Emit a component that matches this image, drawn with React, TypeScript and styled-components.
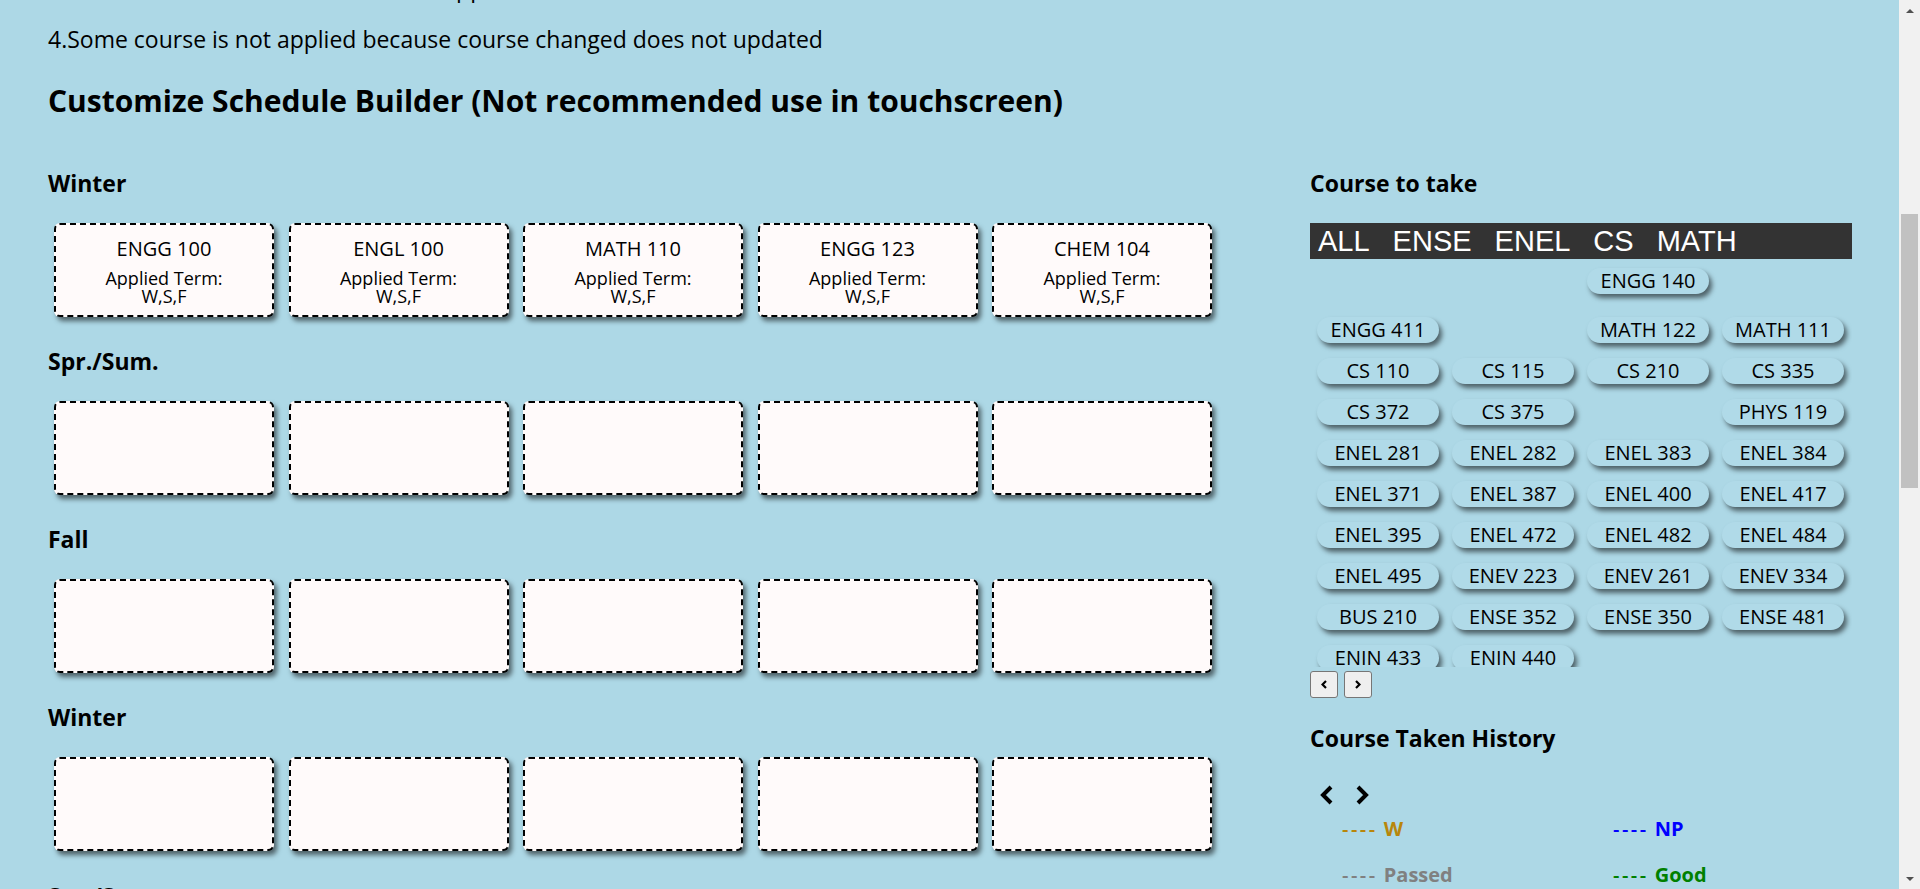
import React from "react";
import styled, { createGlobalStyle } from "styled-components";

const GlobalStyle = createGlobalStyle`
  html, body { margin: 0; padding: 0; height: 100%; overflow: hidden; }
  body {
    background: #add8e6;
    font-family: "Open Sans", "Noto Sans", sans-serif;
    color: #000;
  }
  * { box-sizing: border-box; }
`;

const Frame = styled.div`
  display: flex;
  height: 100vh;
  overflow: hidden;
`;

const Page = styled.main`
  flex: 1;
  min-width: 0;
  overflow: hidden;
  background: #add8e6;
  padding-left: 48px;
`;

const Note = styled.p<{ $first?: boolean }>`
  margin: ${(p) => (p.$first ? "-27px" : "0")} 0 21px;
  font-size: 23px;
  line-height: 30px;
  white-space: nowrap;
`;

const Heading = styled.h2`
  margin: 27px 0 47.2px;
  font-size: 30px;
  line-height: 40px;
  font-weight: 700;
  white-space: nowrap;
`;

const Columns = styled.div`
  display: grid;
  grid-template-columns: 1262px 542px;
  align-items: start;
`;

const Column = styled.section`
  display: flex;
  flex-direction: column;
`;

const Label = styled.h3`
  margin: 0 0 24.6px;
  font-size: 23px;
  line-height: 30px;
  font-weight: 700;
  white-space: nowrap;
`;

const CardRow = styled.div`
  display: grid;
  grid-template-columns: repeat(5, 220px);
  column-gap: 14.5px;
  margin: 0 0 29.5px 6px;
`;

const Card = styled.div`
  height: 94px;
  border: 2px dashed #000;
  border-radius: 6px;
  background: #fffafa;
  box-shadow: 3px 4px 5px rgba(0, 0, 0, 0.55);
  padding-top: 10px;
  text-align: center;
`;

const CardTitle = styled.div`
  font-size: 20px;
  line-height: 28px;
  margin-bottom: 6px;
`;

const CardSub = styled.div`
  font-size: 18px;
  line-height: 18.4px;
`;

const FilterBar = styled.nav`
  display: flex;
  gap: 23px;
  height: 36px;
  padding-left: 8px;
  background: #333;
  font-family: "Liberation Sans", Arial, sans-serif;
  font-size: 29px;
  line-height: 36px;
  color: #fff;
`;

const FilterTab = styled.span`
  cursor: pointer;
`;

const ChipArea = styled.div`
  height: 408px;
  overflow: hidden;
  padding: 9.5px 0 0 7px;
  display: flex;
  flex-direction: column;
  gap: 15px;
`;

const ChipRow = styled.div<{ $extra?: boolean }>`
  display: grid;
  grid-template-columns: repeat(4, 122px);
  column-gap: 13px;
  height: 26px;
  flex: none;
  margin-bottom: ${(p) => (p.$extra ? "8px" : "0")};
`;

const Chip = styled.div`
  height: 26px;
  border-radius: 13px;
  background: #b0dae8;
  box-shadow: 3px 4px 5px rgba(0, 0, 0, 0.55);
  font-size: 20px;
  line-height: 26px;
  text-align: center;
  white-space: nowrap;
`;

const Pager = styled.div`
  display: flex;
  gap: 6px;
  margin-top: 4px;
`;

const PagerButton = styled.button`
  width: 28px;
  height: 27px;
  padding: 0;
  border: 1px solid #767676;
  border-radius: 3px;
  background: #efefef;
  display: flex;
  align-items: center;
  justify-content: center;
`;

const HistoryLabel = styled(Label)`
  margin: 25px 0 0;
`;

const HistoryNav = styled.div`
  display: flex;
  gap: 23px;
  padding-left: 9px;
  margin-top: 32px;
  height: 20px;
`;

const Legend = styled.div`
  display: grid;
  grid-template-columns: 271px 271px;
  row-gap: 19.7px;
  padding-left: 32px;
  margin-top: 11.6px;
`;

const LegendItem = styled.div<{ $color: string }>`
  color: ${(p) => p.$color};
  font-size: 20px;
  line-height: 26px;
  font-weight: 700;
  white-space: nowrap;
`;

const Dashes = styled.span`
  font-weight: 600;
  letter-spacing: 2.5px;
  margin-right: 6px;
`;

const ScrollBar = styled.aside`
  width: 21px;
  flex: none;
  background: #f1f1f1;
  display: flex;
  flex-direction: column;
`;

const ScrollArrow = styled.div<{ $down?: boolean }>`
  height: 21px;
  flex: none;
  display: flex;
  align-items: center;
  justify-content: center;
  &::before {
    content: "";
    width: 0;
    height: 0;
    border-left: 4.5px solid transparent;
    border-right: 4.5px solid transparent;
    ${(p) =>
      p.$down
        ? "border-top: 4px solid #505050;"
        : "border-bottom: 4px solid #505050;"}
  }
`;

const ScrollTrack = styled.div`
  flex: 1;
  padding-top: 193px;
`;

const ScrollThumb = styled.div`
  height: 274px;
  margin: 0 2px;
  background: #c1c1c1;
`;

const Chevron = ({ dir, size }: { dir: "left" | "right"; size: "big" | "small" }) => {
  const big = size === "big";
  const w = big ? 14 : 6;
  const h = big ? 20 : 9;
  const sw = big ? 4 : 2.2;
  const pts =
    dir === "left"
      ? big
        ? "12,2 4,10 12,18"
        : "5,1 1.5,4.5 5,8"
      : big
      ? "2,2 10,10 2,18"
      : "1,1 4.5,4.5 1,8";
  return (
    <svg width={w} height={h} viewBox={`0 0 ${w} ${h}`}>
      <polyline points={pts} fill="none" stroke="#000" strokeWidth={sw} strokeLinejoin="miter" />
    </svg>
  );
};

const firstCards = ["ENGG 100", "ENGL 100", "MATH 110", "ENGG 123", "CHEM 104"];
const terms = ["Winter", "Spr./Sum.", "Fall", "Winter", "Spr./Sum.", "Fall"];

const chipRows: (string | null)[][] = [
  [null, null, "ENGG 140", null],
  ["ENGG 411", null, "MATH 122", "MATH 111"],
  ["CS 110", "CS 115", "CS 210", "CS 335"],
  ["CS 372", "CS 375", null, "PHYS 119"],
  ["ENEL 281", "ENEL 282", "ENEL 383", "ENEL 384"],
  ["ENEL 371", "ENEL 387", "ENEL 400", "ENEL 417"],
  ["ENEL 395", "ENEL 472", "ENEL 482", "ENEL 484"],
  ["ENEL 495", "ENEV 223", "ENEV 261", "ENEV 334"],
  ["BUS 210", "ENSE 352", "ENSE 350", "ENSE 481"],
  ["ENIN 433", "ENIN 440", null, null],
];

const legend = [
  { label: "W", color: "#b8860b" },
  { label: "NP", color: "#0000ff" },
  { label: "Passed", color: "#808080" },
  { label: "Good", color: "#008000" },
];

export default function App() {
  return (
    <>
      <GlobalStyle />
      <Frame>
        <Page>
          <Note $first>3.Some elective course credit can be applied</Note>
          <Note>4.Some course is not applied because course changed does not updated</Note>
          <Heading>Customize Schedule Builder (Not recommended use in touchscreen)</Heading>
          <Columns>
            <Column>
              {terms.map((term, i) => (
                <React.Fragment key={i}>
                  <Label>{term}</Label>
                  <CardRow>
                    {Array.from({ length: 5 }).map((_, j) => (
                      <Card key={j}>
                        {i === 0 && (
                          <>
                            <CardTitle>{firstCards[j]}</CardTitle>
                            <CardSub>
                              Applied Term:
                              <br />
                              W,S,F
                            </CardSub>
                          </>
                        )}
                      </Card>
                    ))}
                  </CardRow>
                </React.Fragment>
              ))}
            </Column>
            <Column>
              <Label>Course to take</Label>
              <FilterBar>
                {["ALL", "ENSE", "ENEL", "CS", "MATH"].map((t) => (
                  <FilterTab key={t}>{t}</FilterTab>
                ))}
              </FilterBar>
              <ChipArea>
                {chipRows.map((row, i) => (
                  <ChipRow key={i} $extra={i === 0}>
                    {row.map((c, j) => (c ? <Chip key={j}>{c}</Chip> : <span key={j} />))}
                  </ChipRow>
                ))}
              </ChipArea>
              <Pager>
                <PagerButton aria-label="previous">
                  <Chevron dir="left" size="small" />
                </PagerButton>
                <PagerButton aria-label="next">
                  <Chevron dir="right" size="small" />
                </PagerButton>
              </Pager>
              <HistoryLabel>Course Taken History</HistoryLabel>
              <HistoryNav>
                <Chevron dir="left" size="big" />
                <Chevron dir="right" size="big" />
              </HistoryNav>
              <Legend>
                {legend.map((l) => (
                  <LegendItem key={l.label} $color={l.color}>
                    <Dashes>----</Dashes>
                    {l.label}
                  </LegendItem>
                ))}
              </Legend>
            </Column>
          </Columns>
        </Page>
        <ScrollBar>
          <ScrollArrow />
          <ScrollTrack>
            <ScrollThumb />
          </ScrollTrack>
          <ScrollArrow $down />
        </ScrollBar>
      </Frame>
    </>
  );
}
